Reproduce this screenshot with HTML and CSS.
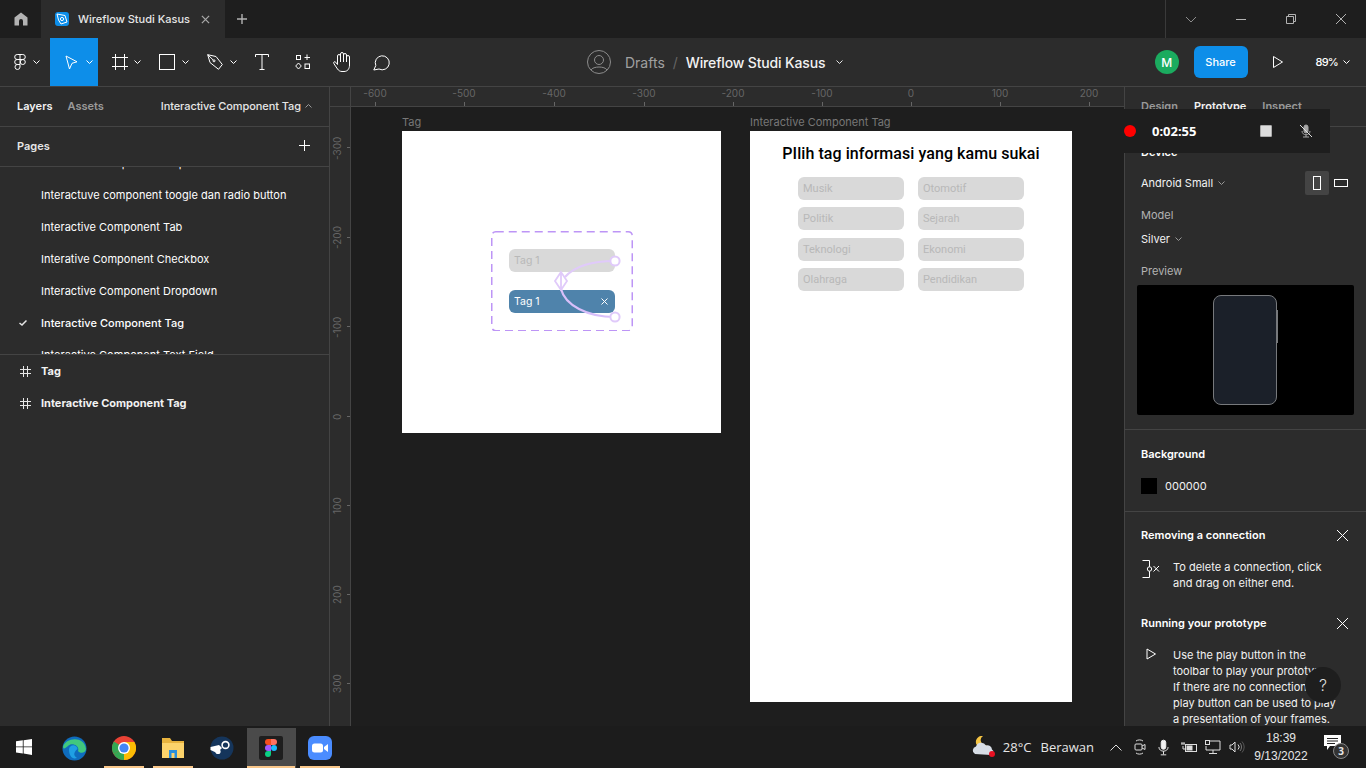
FILE: index.html
```html
<!DOCTYPE html>
<html lang="en">
  <head>
    <meta charset="UTF-8" />
    <meta name="viewport" content="width=device-width, initial-scale=1.0" />
    <title>Wireflow Studi Kasus - Figma</title>
    <link rel="stylesheet" href="styles.css">
  </head>
  <body>
    <div class="titlebar">
      <div class="home-tab">
        <svg width="14" height="14" viewBox="0 0 14 14"><path d="M7 0.5 L13.5 5.5 V13.5 H9 V9 a2 2 0 0 0 -4 0 V13.5 H0.5 V5.5 Z" fill="#b3b3b3"/></svg>
      </div>
      <div class="file-tab">
        <span class="file-icon">
          <svg width="14" height="14" viewBox="0 0 14 14" fill="none" stroke="#fff" stroke-width="1"><path d="M2 2 L10 3.5 L12 10 L6 12 L3.5 8 Z"/><circle cx="7" cy="7" r="1.6"/></svg>
        </span>
        <span class="file-name">Wireflow Studi Kasus</span>
        <svg class="tab-close" width="9" height="9" viewBox="0 0 10 10" stroke="#a8a8a8" stroke-width="1.4"><path d="M1 1 L9 9 M9 1 L1 9"/></svg>
      </div>
      <svg class="tab-plus" width="10" height="10" viewBox="0 0 10 10" stroke="#b3b3b3" stroke-width="1.4"><path d="M5 0 V10 M0 5 H10"/></svg>
      <div class="window-btns">
        <span class="win-btn"><svg width="12" height="12" viewBox="0 0 12 12" fill="none" stroke="#8c8c8c"><path d="M1 4 L6 9 L11 4"/></svg></span>
        <span class="win-btn"><svg width="12" height="12" viewBox="0 0 12 12" stroke="#b3b3b3"><path d="M1 6.5 H11"/></svg></span>
        <span class="win-btn"><svg width="12" height="12" viewBox="0 0 12 12" fill="none" stroke="#b3b3b3"><path d="M1.5 3.5 H8.5 V10.5 H1.5 Z M3.5 3.5 V1.5 H10.5 V8.5 H8.5"/></svg></span>
        <span class="win-btn"><svg width="12" height="12" viewBox="0 0 12 12" stroke="#b3b3b3"><path d="M1 1 L11 11 M11 1 L1 11"/></svg></span>
      </div>
    </div>

    <div class="toolbar">
      <div class="tools">
        <div class="tool tool-menu">
          <svg width="12" height="16" viewBox="0 0 12 16" fill="none" stroke="#fff"><path d="M6 0.5 H3.2 a2.5 2.5 0 0 0 0 5 H6 Z M6 0.5 H8.8 a2.5 2.5 0 0 1 0 5 H6 M6 5.5 H3.2 a2.5 2.5 0 0 0 0 5 H6 Z M6 10.5 H3.2 a2.5 2.5 0 1 0 2.8 2.5 Z"/><circle cx="8.8" cy="8" r="2.5"/></svg>
          <svg class="caret" width="7" height="4" viewBox="0 0 7 4" fill="none" stroke="#fff"><path d="M0.5 0.5 L3.5 3.5 L6.5 0.5"/></svg>
        </div>
        <div class="tool tool-active">
          <svg width="13" height="15" viewBox="0 0 13 15" fill="none" stroke="#fff"><path d="M1 1 L12 6.8 L7 8.3 L4.5 14 Z"/></svg>
          <svg class="caret" width="7" height="4" viewBox="0 0 7 4" fill="none" stroke="#fff"><path d="M0.5 0.5 L3.5 3.5 L6.5 0.5"/></svg>
        </div>
        <div class="tool tool-frame">
          <svg width="16" height="16" viewBox="0 0 16 16" stroke="#fff"><path d="M0 3.5 H16 M0 12.5 H16 M3.5 0 V16 M12.5 0 V16"/></svg>
          <svg class="caret" width="7" height="4" viewBox="0 0 7 4" fill="none" stroke="#fff"><path d="M0.5 0.5 L3.5 3.5 L6.5 0.5"/></svg>
        </div>
        <div class="tool">
          <svg width="16" height="16" viewBox="0 0 16 16" fill="none" stroke="#fff"><rect x="0.5" y="0.5" width="15" height="15"/></svg>
          <svg class="caret" width="7" height="4" viewBox="0 0 7 4" fill="none" stroke="#fff"><path d="M0.5 0.5 L3.5 3.5 L6.5 0.5"/></svg>
        </div>
        <div class="tool">
          <svg width="16" height="16" viewBox="0 0 16 16" fill="none" stroke="#fff"><path d="M0.7 0.7 L9 2.5 L15.3 10.5 L11.5 15.3 L3 8.5 Z"/><circle cx="7" cy="6.8" r="1"/><path d="M0.7 0.7 L6.3 6.1"/></svg>
          <svg class="caret" width="7" height="4" viewBox="0 0 7 4" fill="none" stroke="#fff"><path d="M0.5 0.5 L3.5 3.5 L6.5 0.5"/></svg>
        </div>
        <div class="tool tool-plain">
          <svg width="14" height="16" viewBox="0 0 14 16" fill="none" stroke="#fff"><path d="M0.5 3 V0.5 H13.5 V3 M7 0.5 V15.5 M4.5 15.5 H9.5"/></svg>
        </div>
        <div class="tool tool-plain">
          <svg width="16" height="16" viewBox="0 0 16 16" fill="none" stroke="#fff"><rect x="1.5" y="1.5" width="4" height="4"/><path d="M12 0.5 V6 M9.5 3.5 H15"/><path d="M3.5 9 L6.3 12 L3.5 15 L0.7 12 Z"/><rect x="10" y="10" width="4.5" height="4.5"/></svg>
        </div>
        <div class="tool tool-plain tool-wide">
          <svg width="18" height="20" viewBox="0 0 18 20" fill="none" stroke="#fff"><path d="M4.5 12.5 L2.8 10.3 C1.6 8.9 -0.2 10.2 1 11.8 L4.5 17 C5.5 18.5 7 19.5 9 19.5 H11 C14.5 19.5 16.5 17 16.5 13 V5 a1.5 1.5 0 0 0 -3 0 V10 M13.5 10 V3 a1.5 1.5 0 0 0 -3 0 V10 M10.5 10 V2 a1.5 1.5 0 0 0 -3 0 V10 M7.5 10 V4 a1.5 1.5 0 0 0 -3 0 V12.5"/></svg>
        </div>
        <div class="tool tool-plain tool-wide">
          <svg width="18" height="17" viewBox="0 0 18 17" fill="none" stroke="#fff"><path d="M0.8 16 L2.8 11.5 A7 7 0 1 1 6 15 Z"/></svg>
        </div>
      </div>

      <div class="crumbs">
        <svg class="avatar-ghost" width="24" height="24" viewBox="0 0 24 24" fill="none" stroke="#8c8c8c"><circle cx="12" cy="12" r="11.5"/><circle cx="12" cy="10" r="4.5"/><path d="M4 20 C6 16 18 16 20 20"/></svg>
        <span class="crumb-drafts">Drafts</span>
        <span class="crumb-slash">/</span>
        <span class="crumb-file">Wireflow Studi Kasus</span>
        <svg class="crumb-caret" width="7" height="4" viewBox="0 0 7 4" fill="none" stroke="#e6e6e6"><path d="M0.5 0.5 L3.5 3.5 L6.5 0.5"/></svg>
      </div>

      <div class="toolbar-right">
        <span class="user-badge">M</span>
        <button class="share-btn">Share</button>
        <svg class="play-icon" width="10" height="12" viewBox="0 0 10 12" fill="none" stroke="#fff"><path d="M0.5 0.5 L9.5 6 L0.5 11.5 Z"/></svg>
        <span class="zoom-val">89%</span>
        <svg width="7" height="4" viewBox="0 0 7 4" fill="none" stroke="#fff"><path d="M0.5 0.5 L3.5 3.5 L6.5 0.5"/></svg>
      </div>
    </div>

    <div class="workspace">
      <aside class="left-panel">
        <div class="layers-tabs">
          <span class="tab-on">Layers</span>
          <span class="tab-off">Assets</span>
          <span class="page-switch">Interactive Component Tag</span>
          <svg width="7" height="4" viewBox="0 0 7 4" fill="none" stroke="#999"><path d="M0.5 3.5 L3.5 0.5 L6.5 3.5"/></svg>
        </div>
        <div class="pages-head">
          <span>Pages</span>
          <svg width="11" height="11" viewBox="0 0 11 11" stroke="#fff"><path d="M5.5 0 V11 M0 5.5 H11"/></svg>
        </div>
        <ul class="pages-list">
          <li class="cut-top">Interactive component dropdown</li>
          <li>Interactuve component toogle dan radio button</li>
          <li>Interactive Component Tab</li>
          <li>Interative Component Checkbox</li>
          <li>Interactive Component Dropdown</li>
          <li class="current">
            <svg class="check" width="8" height="6" viewBox="0 0 8 6" fill="none" stroke="#e6e6e6" stroke-width="1.5"><path d="M0.5 3 L3 5 L7.5 0.5"/></svg>
            Interactive Component Tag
          </li>
          <li>Interactive Component Text Field</li>
        </ul>
        <div class="layer-row">
          <svg width="11" height="11" viewBox="0 0 11 11" stroke="#e6e6e6"><path d="M0 3.5 H11 M0 7.5 H11 M3.5 0 V11 M7.5 0 V11"/></svg>
          Tag
        </div>
        <div class="layer-row">
          <svg width="11" height="11" viewBox="0 0 11 11" stroke="#e6e6e6"><path d="M0 3.5 H11 M0 7.5 H11 M3.5 0 V11 M7.5 0 V11"/></svg>
          Interactive Component Tag
        </div>
      </aside>

      <main class="canvas-area">
        <div class="ruler-top">
          <span class="ruler-corner"></span>
          <span class="rx" style="left: 45px">-600</span>
          <span class="rx" style="left: 134px">-500</span>
          <span class="rx" style="left: 224px">-400</span>
          <span class="rx" style="left: 314px">-300</span>
          <span class="rx" style="left: 403px">-200</span>
          <span class="rx" style="left: 492px">-100</span>
          <span class="rx" style="left: 581px">0</span>
          <span class="rx" style="left: 670px">100</span>
          <span class="rx" style="left: 759px">200</span>
        </div>
        <div class="ruler-left">
          <span class="ry" style="top: 41px">-300</span>
          <span class="ry" style="top: 131px">-200</span>
          <span class="ry" style="top: 220px">-100</span>
          <span class="ry" style="top: 310px">0</span>
          <span class="ry" style="top: 399px">100</span>
          <span class="ry" style="top: 488px">200</span>
          <span class="ry" style="top: 577px">300</span>
        </div>

        <span class="frame-label" style="left: 72px; top: 28px">Tag</span>
        <div class="frame frame-tag">
          <div class="variants">
            <div class="chip chip-small">Tag 1</div>
            <div class="chip chip-on"><span>Tag 1</span>
              <svg width="7" height="7" viewBox="0 0 7 7" stroke="#fff"><path d="M0.5 0.5 L6.5 6.5 M6.5 0.5 L0.5 6.5"/></svg>
            </div>
          </div>
          <svg class="wires" width="142" height="100" viewBox="0 0 142 100" fill="none">
            <rect x="0.75" y="0.75" width="140.5" height="99" rx="4" stroke="#bd95f6" stroke-width="1.5" stroke-dasharray="8 5"/>
            <path d="M124 30 C102 30 84 35 74 46" stroke="#e0cafa" stroke-width="2.2"/>
            <path d="M70 58 C74 74 96 86 124 86" stroke="#d8bffa" stroke-width="2.2"/>
            <path d="M70 41 L64 50 L70 59 L76 50 Z M70 42 V58" stroke="#e0cafa" stroke-width="1.8"/>
            <circle cx="124" cy="30" r="4.6" fill="#fff" stroke="#e0cafa" stroke-width="2"/>
            <circle cx="124" cy="86" r="4.6" fill="#fff" stroke="#e0cafa" stroke-width="2"/>
          </svg>
        </div>

        <span class="frame-label" style="left: 420px; top: 28px">Interactive Component Tag</span>
        <div class="frame frame-main">
          <h2 class="frame-title">PIlih tag informasi yang kamu sukai</h2>
          <div class="tag-grid">
            <div class="chip">Musik</div>
            <div class="chip">Otomotif</div>
            <div class="chip">Politik</div>
            <div class="chip">Sejarah</div>
            <div class="chip">Teknologi</div>
            <div class="chip">Ekonomi</div>
            <div class="chip">Olahraga</div>
            <div class="chip">Pendidikan</div>
          </div>
        </div>
      </main>

      <aside class="right-panel">
        <div class="panel-tabs">
          <span class="tab-off">Design</span>
          <span class="tab-on">Prototype</span>
          <span class="tab-off">Inspect</span>
        </div>
        <section class="device-sec">
          <h4>Device</h4>
          <div class="device-row">
            <span>Android Small</span>
            <svg class="dim-caret" width="7" height="4" viewBox="0 0 7 4" fill="none" stroke="#999"><path d="M0.5 0.5 L3.5 3.5 L6.5 0.5"/></svg>
            <span class="orient orient-on"><svg width="8" height="14" viewBox="0 0 8 14" fill="none" stroke="#fff"><rect x="0.5" y="0.5" width="7" height="13"/></svg></span>
            <span class="orient"><svg width="14" height="8" viewBox="0 0 14 8" fill="none" stroke="#fff"><rect x="0.5" y="0.5" width="13" height="7"/></svg></span>
          </div>
          <div class="field-label">Model</div>
          <div class="model-row">
            <span>Silver</span>
            <svg class="dim-caret" width="7" height="4" viewBox="0 0 7 4" fill="none" stroke="#999"><path d="M0.5 0.5 L3.5 3.5 L6.5 0.5"/></svg>
          </div>
          <div class="field-label field-preview">Preview</div>
          <div class="preview-box">
            <div class="phone"></div>
          </div>
        </section>
        <section class="bg-sec">
          <h4>Background</h4>
          <div class="bg-row"><span class="swatch"></span>000000</div>
        </section>
        <section class="tip">
          <div class="tip-head">
            <h4>Removing a connection</h4>
            <svg width="11" height="11" viewBox="0 0 11 11" stroke="#fff"><path d="M0 0 L11 11 M11 0 L0 11"/></svg>
          </div>
          <div class="tip-body">
            <svg class="tip-icon" width="20" height="18" viewBox="0 0 20 18" fill="none" stroke="#fff"><path d="M1.5 0.5 H8.5 V17.5 H1.5"/><circle cx="8.5" cy="9" r="2.2" fill="#2c2c2c"/><path d="M12.5 6 L18 11.5 M18 6 L12.5 11.5"/></svg>
            <p>To delete a connection, click and drag on either end.</p>
          </div>
        </section>
        <section class="tip">
          <div class="tip-head">
            <h4>Running your prototype</h4>
            <svg width="11" height="11" viewBox="0 0 11 11" stroke="#fff"><path d="M0 0 L11 11 M11 0 L0 11"/></svg>
          </div>
          <div class="tip-body">
            <svg class="tip-icon" width="20" height="12" viewBox="0 0 20 12" fill="none" stroke="#fff"><path d="M6 1 L14.5 6 L6 11 Z"/></svg>
            <p>Use the play button in the toolbar to play your prototype.<br />If there are no connections, the play button can be used to play a presentation of your frames.</p>
          </div>
        </section>
        <div class="help-btn">?</div>
      </aside>

      <div class="rec-bar">
        <span class="rec-dot"></span>
        <span class="rec-time">0:02:55</span>
        <span class="rec-stop"></span>
        <svg class="rec-mic" width="14" height="14" viewBox="0 0 14 14" fill="none" stroke="#a6a6a6"><rect x="5" y="1" width="4" height="8" rx="2" fill="#a6a6a6"/><path d="M3 7 C3 12 11 12 11 7 M7 11 V13 M4 13 H10"/><path d="M1 1 L13 13" stroke="#ddd"/></svg>
      </div>
    </div>

    <footer class="taskbar">
      <div class="task-start">
        <svg width="16" height="16" viewBox="0 0 16 16" fill="#fff"><path d="M0 2.3 L6.8 1.3 V7.4 H0 Z M7.6 1.2 L16 0 V7.4 H7.6 Z M0 8.2 H6.8 V14.4 L0 13.4 Z M7.6 8.2 H16 V16 L7.6 14.6 Z"/></svg>
      </div>
      <div class="task-app">
        <svg width="25" height="25" viewBox="0 0 25 25"><circle cx="12.5" cy="12.5" r="12" fill="#0f6cbd"/><path d="M1 11 C3 2 22 -1 24 13 C24 17 18 18 16 15 C18 10 10 6 6 10 C3 12 2 14 1 11 Z" fill="#41c87e"/><path d="M7 14 C7 8 15 8 15.5 13 C13 15 10 19 15 22 C10 24 7 19 7 14 Z" fill="#1fa0e4"/></svg>
      </div>
      <div class="task-app task-open">
        <svg width="24" height="24" viewBox="0 0 24 24"><circle cx="12" cy="12" r="12" fill="#e94235"/><path d="M12 12 L1.6 18 A12 12 0 0 0 12 24 Z" fill="#34a853"/><path d="M2 5.5 A12 12 0 0 0 1.6 18 L12 12 Z" fill="#34a853"/><path d="M12 6 H22.4 A12 12 0 0 1 12 24 L12 12 Z" fill="#fbbc04"/><circle cx="12" cy="12" r="6" fill="#fff"/><circle cx="12" cy="12" r="4.6" fill="#4285f4"/></svg>
      </div>
      <div class="task-app task-open">
        <svg width="24" height="22" viewBox="0 0 24 22"><path d="M1 1 H9 L11 4 H23 V21 H1 Z" fill="#e8b33e"/><rect x="1" y="6" width="22" height="15" fill="#fcd36b"/><path d="M8 21 V13 H16 V21 H13.5 V16 H10.5 V21 Z" fill="#2a8fdc"/></svg>
      </div>
      <div class="task-app">
        <svg width="24" height="24" viewBox="0 0 24 24"><circle cx="12" cy="12" r="11.5" fill="#15355b"/><path d="M0.5 14 L7 17 L12 12 L9 9 L0.5 11 Z" fill="#fff"/><circle cx="15.5" cy="9" r="4.2" fill="#fff"/><circle cx="15.5" cy="9" r="2.6" fill="#15355b"/><circle cx="8" cy="15.5" r="2.6" fill="#fff"/></svg>
      </div>
      <div class="task-app task-open task-current">
        <span class="figma-tile">
          <svg width="12" height="18" viewBox="0 0 12 18"><path d="M6 0 H3 a3 3 0 0 0 0 6 H6 Z" fill="#f24e1e"/><path d="M6 0 H9 a3 3 0 0 1 0 6 H6 Z" fill="#ff7262"/><path d="M6 6 H3 a3 3 0 0 0 0 6 H6 Z" fill="#a259ff"/><circle cx="9" cy="9" r="3" fill="#1abcfe"/><path d="M3 12 H6 V15 a3 3 0 1 1 -3 -3 Z" fill="#0acf83"/></svg>
        </span>
      </div>
      <div class="task-app task-open">
        <svg width="24" height="24" viewBox="0 0 24 24"><rect width="24" height="24" rx="6" fill="#4a8cff"/><rect x="4" y="7.5" width="11" height="9" rx="2.5" fill="#fff"/><path d="M16 11 L20 8 V16 L16 13 Z" fill="#fff"/></svg>
      </div>

      <div class="tray">
        <svg class="weather" width="24" height="22" viewBox="0 0 24 22"><path d="M11 0 A6 6 0 1 0 15 9 A5 5 0 0 1 11 0 Z" fill="#f5c443"/><path d="M3 18 a4 4 0 0 1 1 -7.5 a5.5 5.5 0 0 1 10 -1 a4.5 4.5 0 0 1 6 4 a3 3 0 0 1 -1 5.5 Z" fill="#d7dde6"/><circle cx="20" cy="18" r="3" fill="#e81123"/></svg>
        <span class="temp">28°C</span>
        <span class="cond">Berawan</span>
        <svg class="tray-ic" width="12" height="7" viewBox="0 0 12 7" fill="none" stroke="#ddd"><path d="M0.5 6.5 L6 1 L11.5 6.5"/></svg>
        <svg class="tray-ic" width="12" height="16" viewBox="0 0 12 16" fill="none" stroke="#ddd"><rect x="1" y="5" width="7" height="6" rx="1"/><path d="M8 7 L11 5.5 V10.5 L8 9 M2 2 C4 0.5 7 0.5 9 2 M2 14 C4 15.5 7 15.5 9 14"/></svg>
        <svg class="tray-ic" width="11" height="17" viewBox="0 0 12 17" fill="none" stroke="#f2f2f2"><rect x="3.5" y="0.5" width="5" height="10" rx="2.5" fill="#f2f2f2"/><path d="M1 8 C1 14 11 14 11 8 M6 12.5 V16 M3 16.5 H9"/></svg>
        <svg class="tray-ic-tight" width="16" height="12" viewBox="0 0 16 12" fill="none" stroke="#ddd"><rect x="4.5" y="3.5" width="11" height="7"/><rect x="6" y="5" width="5" height="4" fill="#ddd"/><path d="M0 3 H4 M1 1 V3 M3 1 V3 M2 5 V8 H4"/></svg>
        <svg class="tray-ic-tight" width="16" height="15" viewBox="0 0 16 15" fill="none" stroke="#ddd"><path d="M5 1 H15 V10 H1 V6 M8 10 V13 M4 13.5 H12"/><rect x="0.5" y="0.5" width="4" height="4"/></svg>
        <svg class="tray-speaker" width="16" height="12" viewBox="0 0 16 12" fill="none" stroke="#ddd"><path d="M1 4 H3 L6 1 V11 L3 8 H1 Z"/><path d="M9 3.5 A3.5 3.5 0 0 1 9 8.5" /><path d="M11 2 A6 6 0 0 1 11 10" stroke="#777"/><path d="M13 0.5 A8 8 0 0 1 13 11.5" stroke="#555"/></svg>
        <div class="clock"><span>18:39</span><span>9/13/2022</span></div>
        <div class="notif">
          <svg width="17" height="15" viewBox="0 0 17 15"><path d="M0 0 H17 V11 H6 L3 15 V11 H0 Z" fill="#fff"/><path d="M3 3.5 H14 M3 6 H14 M3 8.5 H11" stroke="#222"/></svg>
          <span class="notif-count">3</span>
        </div>
      </div>
    </footer>
  </body>
</html>
```
FILE: styles.css
```css
* {
  box-sizing: border-box;
}

body {
  margin: 0;
  width: 1366px;
  height: 768px;
  overflow: hidden;
  background: #2c2c2c;
  color: #fff;
  font-family: Inter, "Noto Sans", sans-serif;
  font-size: 11px;
  display: flex;
  flex-direction: column;
}

svg {
  display: block;
  flex: none;
}

h4 {
  margin: 0;
  font-size: 11px;
  font-weight: 600;
}

/* title bar */
.titlebar {
  height: 38px;
  flex: none;
  background: #1e1e1e;
  display: flex;
  align-items: center;
}

.home-tab {
  width: 41px;
  height: 38px;
  display: flex;
  align-items: center;
  justify-content: center;
}

.file-tab {
  width: 184px;
  height: 38px;
  background: #2c2c2c;
  display: flex;
  align-items: center;
  padding-left: 14px;
}

.file-icon {
  width: 14px;
  height: 14px;
  border-radius: 3px;
  background: #0d8ee9;
  margin-right: 9px;
}

.file-name {
  font-weight: 500;
  color: #e6e6e6;
  width: 123px;
}

.tab-plus {
  margin-left: 12px;
}

.window-btns {
  margin-left: auto;
  display: flex;
  height: 38px;
  border-left: 1px solid #3a3a3a;
}

.win-btn {
  width: 50px;
  display: flex;
  align-items: center;
  justify-content: center;
}

/* toolbar */
.toolbar {
  height: 49px;
  flex: none;
  background: #2c2c2c;
  border-bottom: 1px solid #444;
  display: flex;
  align-items: center;
  position: relative;
}

.tools {
  display: flex;
  height: 48px;
}

.tool {
  width: 48px;
  height: 48px;
  display: flex;
  align-items: center;
  gap: 7px;
  padding-left: 13px;
}

.tool-menu {
  width: 50px;
  padding-left: 14px;
}

.tool-active {
  background: #0d8ee9;
  padding-left: 15px;
  gap: 8px;
}

.tool-frame {
  padding-left: 14px;
  gap: 6px;
}

.tool-plain {
  width: 40px;
}

.tool-wide {
  padding-left: 11px;
}

.crumbs {
  position: absolute;
  left: 587px;
  top: 12px;
  display: flex;
  align-items: center;
  height: 24px;
  font-size: 14px;
}

.crumb-drafts {
  margin-left: 14px;
  color: #a0a0a0;
}

.crumb-slash {
  margin: 0 8px;
  color: #666;
}

.crumb-file {
  font-weight: 500;
  color: #f2f2f2;
  letter-spacing: -0.15px;
}

.crumb-caret {
  margin-left: 11px;
}

.toolbar-right {
  margin-left: auto;
  display: flex;
  align-items: center;
  padding-right: 16px;
}

.user-badge {
  width: 24px;
  height: 24px;
  border-radius: 50%;
  background: #1bab5f;
  display: flex;
  align-items: center;
  justify-content: center;
  font-size: 12px;
  font-weight: 500;
}

.share-btn {
  width: 54px;
  height: 32px;
  margin-left: 15px;
  border: 0;
  border-radius: 6px;
  background: #0d8ee9;
  color: #fff;
  font-family: inherit;
  font-size: 11px;
  font-weight: 500;
}

.play-icon {
  margin: 0 33px 0 25px;
}

.zoom-val {
  font-weight: 500;
  letter-spacing: -0.8px;
  margin-right: 5px;
}

/* main area */
.workspace {
  flex: 1;
  display: flex;
  min-height: 0;
  position: relative;
}

.left-panel {
  width: 330px;
  flex: none;
  background: #2c2c2c;
  border-right: 1px solid #444;
}

.layers-tabs {
  height: 40px;
  display: flex;
  align-items: center;
  padding: 0 17px 2px;
  border-bottom: 1px solid #444;
  font-weight: 600;
}

.tab-on {
  color: #f2f2f2;
  font-weight: 600;
}

.tab-off {
  color: #9a9a9a;
  font-weight: 600;
}

.layers-tabs .tab-off {
  margin-left: 15px;
}

.page-switch {
  margin-left: auto;
  margin-right: 4px;
  font-weight: 500;
  color: #e6e6e6;
  letter-spacing: -0.08px;
}

.pages-head {
  height: 40px;
  display: flex;
  align-items: center;
  justify-content: space-between;
  padding: 0 19px 2px 17px;
  border-bottom: 1px solid #444;
  font-weight: 600;
  color: #e6e6e6;
}

.pages-list {
  list-style: none;
  margin: 0;
  padding: 0;
  height: 188px;
  overflow: hidden;
  border-bottom: 1px solid #444;
}

.pages-list li {
  height: 32px;
  line-height: 32px;
  padding-left: 41px;
  color: #fff;
  letter-spacing: 0.03px;
  position: relative;
}

.pages-list .cut-top {
  margin-top: -20px;
}

.pages-list .current {
  font-weight: 500;
}

.check {
  position: absolute;
  left: 19px;
  top: 13px;
}

.layer-row {
  height: 32px;
  display: flex;
  align-items: center;
  gap: 10px;
  padding-left: 20px;
  font-weight: 700;
  color: #f2f2f2;
}

/* canvas */
.canvas-area {
  flex: 1;
  position: relative;
  background: #1e1e1e;
  overflow: hidden;
}

.ruler-top {
  position: absolute;
  left: 0;
  top: 0;
  right: 0;
  height: 20px;
  background: #2c2c2c;
  border-bottom: 1px solid #444;
}

.ruler-left {
  position: absolute;
  left: 0;
  top: 20px;
  bottom: 0;
  width: 21px;
  background: #2c2c2c;
  border-right: 1px solid #444;
}

.ruler-corner {
  position: absolute;
  left: 0;
  top: 0;
  width: 21px;
  height: 20px;
  border-right: 1px solid #444;
}

.rx {
  position: absolute;
  top: 0;
  width: 40px;
  margin-left: -20px;
  text-align: center;
  font-size: 10px;
  line-height: 12px;
  color: #666;
}

.rx::after {
  content: "";
  position: absolute;
  left: 20px;
  top: 15px;
  width: 1px;
  height: 4px;
  background: #666;
}

.ry {
  position: absolute;
  left: 0;
  width: 14px;
  height: 30px;
  margin-top: -15px;
  font-size: 10px;
  color: #666;
  writing-mode: vertical-rl;
  transform: rotate(180deg);
  text-align: center;
  line-height: 14px;
}

.ry::after {
  content: "";
  position: absolute;
  left: -6px;
  top: 15px;
  width: 3px;
  height: 1px;
  background: #666;
}

.frame-label {
  position: absolute;
  font-size: 11px;
  color: #777;
}

.frame {
  position: absolute;
  background: #fff;
}

.frame-tag {
  left: 72px;
  top: 44px;
  width: 319px;
  height: 302px;
}

.variants {
  position: absolute;
  left: 89px;
  top: 100px;
  width: 142px;
  height: 100px;
  padding: 18px;
  display: flex;
  flex-direction: column;
  gap: 18px;
}

.wires {
  position: absolute;
  left: 89px;
  top: 100px;
}

.chip {
  height: 23px;
  border-radius: 6px;
  background: #d9d9d9;
  color: #b8b8b8;
  font-family: Roboto, sans-serif;
  font-size: 11px;
  line-height: 23px;
  padding-left: 5px;
}

.chip-small {
  width: 106px;
  font-family: Inter, sans-serif;
  font-size: 10.5px;
  line-height: 24px;
}

.chip-on {
  width: 106px;
  font-family: Inter, sans-serif;
  font-size: 10.5px;
  line-height: 24px;
  background: #4f83ab;
  color: #fff;
  display: flex;
  align-items: center;
  justify-content: space-between;
  padding-right: 7px;
}

.frame-main {
  left: 420px;
  top: 44px;
  width: 322px;
  height: 571px;
  display: flex;
  flex-direction: column;
  align-items: center;
}

.frame-title {
  margin: 14px 0 0;
  color: #000;
  font-family: Roboto, sans-serif;
  font-size: 16px;
  font-weight: 500;
  line-height: 18px;
  letter-spacing: 0.06px;
}

.tag-grid {
  margin-top: 14px;
  display: grid;
  grid-template-columns: 106px 106px;
  column-gap: 14px;
  row-gap: 7.3px;
}

/* right panel */
.right-panel {
  width: 242px;
  flex: none;
  background: #2c2c2c;
  border-left: 1px solid #444;
  position: relative;
  overflow: hidden;
}

.panel-tabs {
  height: 40px;
  display: flex;
  align-items: center;
  gap: 16px;
  padding: 0 0 2px 16px;
  border-bottom: 1px solid #444;
}

.device-sec {
  height: 303px;
  padding: 0 16px;
  border-bottom: 1px solid #444;
}

.device-sec h4 {
  height: 24px;
  line-height: 50px;
}

.device-row {
  margin: 18px -3px 0 0;
  height: 28px;
  display: flex;
  align-items: center;
  color: #f2f2f2;
}

.dim-caret {
  margin-left: 5px;
}

.orient {
  width: 24px;
  height: 24px;
  display: flex;
  align-items: center;
  justify-content: center;
  border-radius: 2px;
}

.orient-on {
  background: #444;
  margin-left: auto;
}

.field-label {
  margin-top: 10px;
  color: #b3b3b3;
  height: 16px;
  line-height: 16px;
}

.field-preview {
  margin-top: 16px;
}

.model-row {
  margin-top: 8px;
  height: 16px;
  display: flex;
  align-items: center;
  color: #f2f2f2;
}

.preview-box {
  margin: 6px -4px 0;
  width: 217px;
  height: 130px;
  background: #000;
  border-radius: 2px;
  display: flex;
  align-items: center;
  justify-content: center;
}

.phone {
  width: 64px;
  height: 110px;
  margin-right: 2px;
  border: 1.5px solid #77797c;
  border-radius: 8px;
  background: #1b2029;
  position: relative;
}

.phone::after {
  content: "";
  position: absolute;
  right: -2.5px;
  top: 14px;
  width: 1px;
  height: 33px;
  background: #77797c;
}

.bg-sec {
  height: 82px;
  padding: 17px 16px 0;
  border-bottom: 1px solid #444;
}

.bg-row {
  margin-top: 17px;
  display: flex;
  align-items: center;
  gap: 8px;
  color: #f2f2f2;
}

.swatch {
  width: 16px;
  height: 16px;
  background: #000;
}

.tip {
  padding: 16px 16px 0;
  height: 88px;
}

.tip-head {
  display: flex;
  justify-content: space-between;
  align-items: center;
  padding-right: 2px;
  height: 14px;
}

.tip-body {
  display: flex;
  margin-top: 17px;
}

.tip-icon {
  margin-right: 12px;
  margin-top: 1px;
}

.tip-body p {
  margin: 0;
  line-height: 16px;
  color: #f2f2f2;
  width: 170px;
}

.help-btn {
  position: absolute;
  left: 180px;
  top: 580px;
  width: 36px;
  height: 36px;
  border-radius: 50%;
  background: #1e1e1e;
  color: #ddd;
  font-size: 16px;
  font-weight: 300;
  text-align: center;
  line-height: 36px;
}

.rec-bar {
  position: absolute;
  left: 1124px;
  top: 22px;
  width: 206px;
  height: 44px;
  background: #1e1e1e;
  display: flex;
  align-items: center;
}

.rec-dot {
  width: 12px;
  height: 12px;
  border-radius: 50%;
  background: #f00;
}

.rec-time {
  margin-left: 16px;
  width: 51px;
  font-family: "Noto Sans", sans-serif;
  font-size: 13px;
  font-weight: 700;
}

.rec-stop {
  width: 12px;
  height: 12px;
  margin-left: 57px;
  background: #ddd;
  border: 1px solid #aaa;
  border-radius: 1px;
}

.rec-mic {
  margin-left: 27px;
}

/* taskbar */
.taskbar {
  height: 42px;
  flex: none;
  background: #1c1c1c;
  display: flex;
  align-items: center;
}

.task-start {
  width: 51px;
  display: flex;
  padding-left: 16px;
}

.task-app {
  width: 49px;
  height: 40px;
  margin-top: 2px;
  padding-right: 2px;
  display: flex;
  align-items: center;
  justify-content: center;
  position: relative;
}

.task-open::after {
  content: "";
  position: absolute;
  left: 4px;
  right: 5px;
  bottom: 0;
  height: 2px;
  background: #f9c78a;
}

.task-current {
  background: #4a4a4a;
}

.task-current::after {
  left: 0;
  right: 1px;
}

.figma-tile {
  width: 24px;
  height: 24px;
  border-radius: 2px;
  background: #1e1e1e;
  display: flex;
  align-items: center;
  justify-content: center;
}

.tray {
  margin-left: auto;
  display: flex;
  align-items: center;
  padding-right: 17px;
  font-family: "Open Sans", "Noto Sans", sans-serif;
  font-size: 13px;
  color: #e6e6e6;
}

.weather {
  margin-right: 7px;
}

.temp {
  margin-right: 9px;
}

.cond {
  margin-right: 16px;
}

.tray-ic {
  margin-right: 12px;
}

.tray-ic-tight {
  margin-right: 8px;
}

.tray-speaker {
  margin-right: 10px;
}

.clock {
  display: flex;
  flex-direction: column;
  align-items: center;
  width: 52px;
  font-family: "Liberation Sans", sans-serif;
  font-size: 12px;
  line-height: 18px;
  margin-right: 17px;
}

.notif {
  position: relative;
  width: 25px;
  height: 24px;
}

.notif-count {
  position: absolute;
  left: 9px;
  top: 8px;
  width: 16px;
  height: 16px;
  border: 1px solid #888;
  border-radius: 50%;
  background: #333;
  font-size: 10px;
  font-weight: 700;
  line-height: 14px;
  text-align: center;
}
```
